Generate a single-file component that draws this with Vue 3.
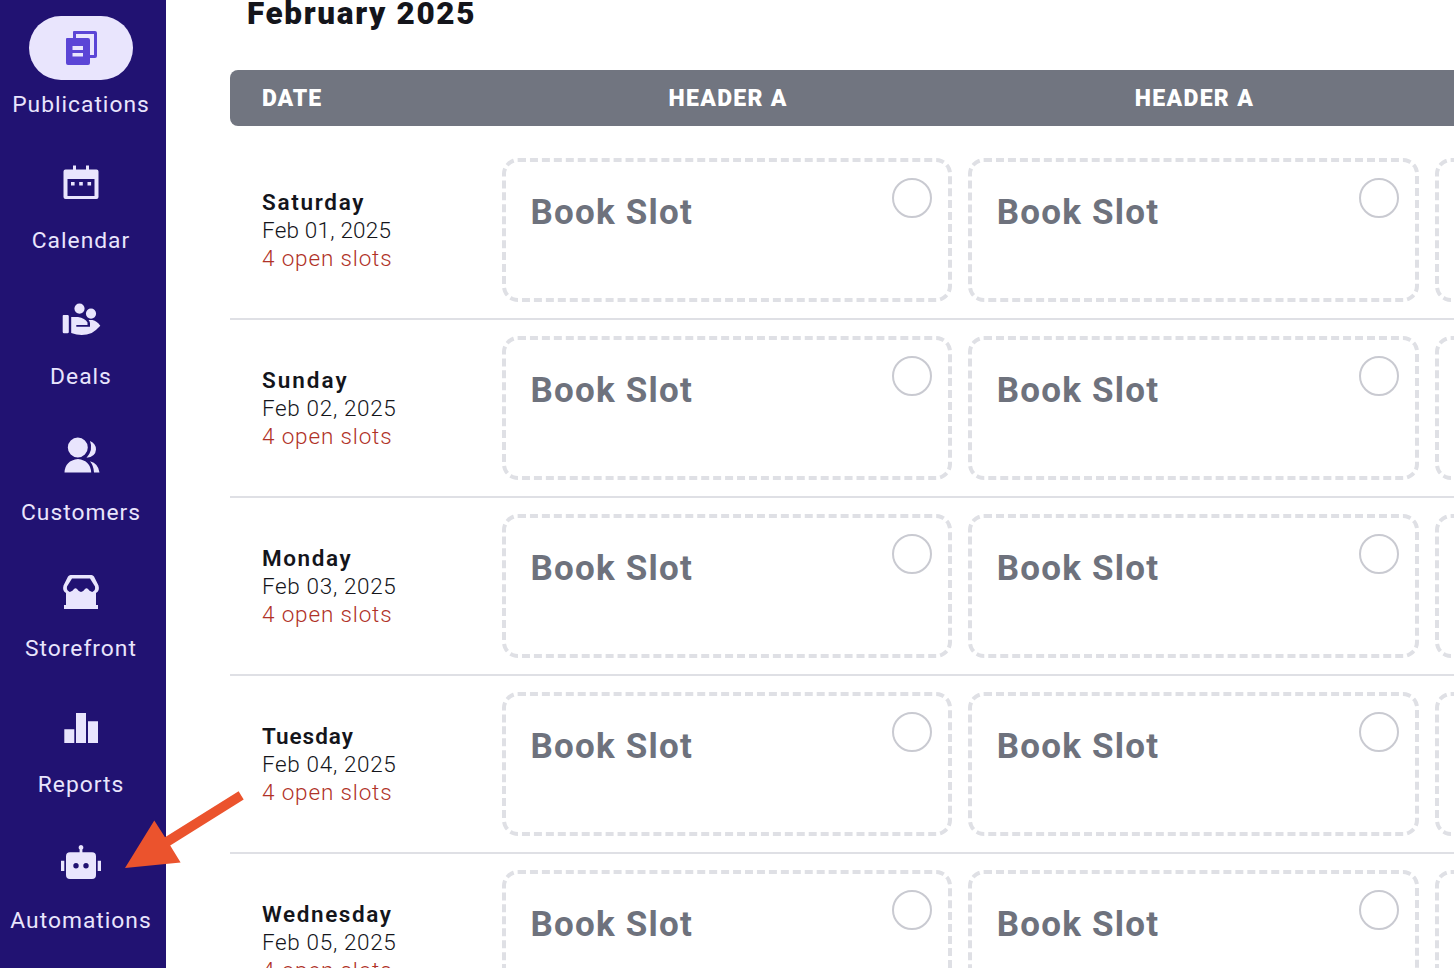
<template>
  <div class="page">
    <nav class="sidebar">
      <a
        v-for="item in navItems"
        :key="item.name"
        class="nav-item"
        :class="{ 'nav-item--active': item.name === activeItem }"
      >
        <span class="nav-pill">
          <svg class="nav-icon" viewBox="0 0 48 48">
            <path :d="item.icon" fill-rule="evenodd" />
          </svg>
        </span>
        <span class="nav-label">{{ item.name }}</span>
      </a>
    </nav>

    <main class="schedule">
      <h1 class="month">February 2025</h1>

      <div class="table-head">
        <div class="head-date">DATE</div>
        <div v-for="n in 2" :key="n" class="head-cell">HEADER A</div>
      </div>

      <div class="rows">
        <section v-for="day in days" :key="day.date" class="row">
          <div class="day">
            <strong class="day-name" :class="`day-name--${day.name.toLowerCase()}`">{{ day.name }}</strong>
            <span class="day-date" :class="{ 'day-date--narrow': day.date.includes('01') }">{{ day.date }}</span>
            <span class="day-open">4 open slots</span>
          </div>
          <div v-for="n in 2" :key="n" class="slot">
            <span class="slot-title">Book Slot</span>
            <span class="slot-check"></span>
          </div>
          <div class="slot"></div>
        </section>
      </div>
    </main>

    <svg class="arrow" viewBox="0 0 120 80">
      <path d="M0 78L29.3 30.5L40 47.3L113.6 1.2L118.7 9.6L45.2 55.5L55.6 72.5Z" />
    </svg>
  </div>
</template>

<script setup>
import { ref } from 'vue'

const activeItem = ref('Publications')

const navItems = [
  {
    name: 'Publications',
    icon: 'M17 7H38a2 2 0 0 1 2 2V32a2 2 0 0 1-2 2H33V31H37V10H19V14H16V8a1 1 0 0 1 1-1ZM10 14H31a2 2 0 0 1 2 2V39a2 2 0 0 1-2 2H11a2 2 0 0 1-2-2V15a1 1 0 0 1 1-1ZM15.5 22V26H26V22ZM15.5 29V32.5H26V29Z'
  },
  {
    name: 'Calendar',
    icon: 'M16 5.500h3v4h10v-4h3v4h7.500a2 2 0 0 1 2 2v25.500a2 2 0 0 1-2 2h-31a2 2 0 0 1-2-2V11.500a2 2 0 0 1 2-2H16ZM10.500 19v17h27V19ZM14 22h3.600v3.600H14ZM22.200 22h3.600v3.600h-3.600ZM30.500 22h3.600v3.600h-3.600Z'
  },
  {
    name: 'Deals',
    icon: 'M22.500 7.500a5.100 5.100 0 1 0 0 10.200a5.100 5.100 0 1 0 0-10.200ZM34 12.500a5.100 5.100 0 1 0 0 10.200a5.100 5.100 0 1 0 0-10.200ZM6.500 19H10.500a1.300 1.300 0 0 1 1.300 1.300V36a1.300 1.300 0 0 1-1.300 1.300H7a1.300 1.300 0 0 1-1.300-1.300V20Q5.700 19 6.500 19ZM14.200 21H21Q28 22 30.500 26.500V29H19.300V30.700H33V27.500Q33 25.500 31.700 24.200V24H35.500Q40 25 43.300 29.700Q39 34.500 34.700 37Q25 41 14.200 37Z'
  },
  {
    name: 'Customers',
    icon: 'M20.800 5.500a10 10 0 1 0 0 20a10 10 0 1 0 0-20ZM7.500 40.500Q8 28.500 21 27Q33.500 28.500 34.200 40.500ZM33 9Q39 11.500 39 17.500Q38.500 25 29.500 25.700Q36.500 18 33 9ZM33 29.200Q41.500 31.500 42.500 40.500H37Q36.800 34 33 29.200Z'
  },
  {
    name: 'Storefront',
    icon: 'M13.500 7H34.500Q36 7 37 8.500L41.500 17.500Q43 23 39 25V37H41V41H7V37H9V25Q5 23 6.500 17.500L11 8.500Q12 7 13.500 7ZM15 10.500L10 18.500Q9.200 22.500 12.800 24Q16 23 17 21Q18.500 19.500 20 21Q22 24 24 24Q26 24 28 21Q29.500 19.500 31 21Q32 23 35.200 24Q38.800 22.500 38 18.500L33 10.500Z'
  },
  {
    name: 'Reports',
    icon: 'M7.300 25.300H17.300V39H7.300ZM19 9H29V39H19ZM31 17.200H41V39H31Z'
  },
  {
    name: 'Automations',
    icon: 'M24 5.100a2.500 2.500 0 0 0-1.400 4.500V12.300H13a4 4 0 0 0-4 4V35a4 4 0 0 0 4 4H35a4 4 0 0 0 4-4V16.300a4 4 0 0 0-4-4H25.400V9.600A2.500 2.500 0 0 0 24 5.100ZM4 20.700H7.300V31H4ZM40.700 20.700H44V31H40.700ZM19 23a2.700 2.700 0 1 0 0 5.400a2.700 2.700 0 1 0 0-5.400ZM29 23a2.700 2.700 0 1 0 0 5.400a2.700 2.700 0 1 0 0-5.400Z'
  }
]

const days = [
  { name: 'Saturday', date: 'Feb 01, 2025' },
  { name: 'Sunday', date: 'Feb 02, 2025' },
  { name: 'Monday', date: 'Feb 03, 2025' },
  { name: 'Tuesday', date: 'Feb 04, 2025' },
  { name: 'Wednesday', date: 'Feb 05, 2025' }
]
</script>

<style>
body {
  background: #fff;
}
</style>

<style scoped>
.page {
  position: relative;
  display: flex;
  height: 968px;
  overflow: hidden;
  font-family: Roboto, 'Liberation Sans', sans-serif;
  color: #14151b;
}

.sidebar {
  display: flex;
  flex: 0 0 166px;
  flex-direction: column;
  gap: 32px;
  box-sizing: border-box;
  padding: 16px 4px 0 0;
  background: #211272;
}

.nav-item {
  display: flex;
  flex-direction: column;
  align-items: center;
  flex: none;
  height: 104px;
  color: #e9e5fd;
}

.nav-pill {
  display: flex;
  flex: none;
  align-items: center;
  justify-content: center;
  width: 104px;
  height: 64px;
  border-radius: 32px;
}

.nav-item--active .nav-pill {
  background: #e9e5fd;
  color: #5b45d6;
}

.nav-icon {
  width: 48px;
  height: 48px;
  fill: currentColor;
}

.nav-label {
  margin-top: 8px;
  font-size: 22.8px;
  line-height: 34px;
  letter-spacing: 1px;
  white-space: nowrap;
}

.schedule {
  flex: none;
  width: 1672px;
  padding-left: 64px;
}

.month {
  margin: -2px 0 40px 17px;
  font-size: 31.5px;
  font-weight: 900;
  line-height: 32px;
  letter-spacing: 1.65px;
}

.table-head {
  display: grid;
  grid-template-columns: 240px repeat(3, 450.33px);
  gap: 16px;
  box-sizing: border-box;
  height: 56px;
  padding-left: 16px;
  border-radius: 8px;
  background: #717580;
  color: #fff;
  font-size: 23px;
  font-weight: 900;
  line-height: 58px;
  letter-spacing: 1.3px;
}

.head-date {
  padding-left: 16px;
  letter-spacing: 0.9px;
}

.head-cell {
  padding-left: 2px;
  text-align: center;
}

.rows {
  padding-top: 16px;
}

.row {
  display: grid;
  grid-template-columns: 240px repeat(3, 450.33px);
  gap: 16px;
  padding: 16px 0 16px 16px;
  border-bottom: 2px solid #dfe0e5;
}

.day {
  display: flex;
  flex-direction: column;
  justify-content: center;
  padding-left: 16px;
  font-size: 22.5px;
  line-height: 28px;
}

.day-name {
  font-weight: 600;
  letter-spacing: 1.7px;
}

.day-name--sunday {
  letter-spacing: 2px;
}

.day-name--monday {
  letter-spacing: 1.6px;
}

.day-name--tuesday {
  letter-spacing: 1px;
}

.day-name--wednesday {
  letter-spacing: 1.6px;
}

.day-date {
  font-weight: 300;
  letter-spacing: 0.65px;
}

.day-date--narrow {
  letter-spacing: 0.2px;
}

.day-open {
  color: #b03227;
  font-weight: 300;
  letter-spacing: 0.85px;
}

.slot {
  display: flex;
  justify-content: space-between;
  box-sizing: border-box;
  height: 144px;
  padding: 16px 16px 0 24.5px;
  border: 4px dashed #dfe0e5;
  border-radius: 16px;
}

.slot-title {
  padding-top: 15px;
  color: #6e727d;
  font-size: 35px;
  font-weight: 700;
  line-height: 40px;
  letter-spacing: 1.2px;
}

.slot-check {
  box-sizing: border-box;
  width: 40px;
  height: 40px;
  border: 2px solid #c9cad1;
  border-radius: 50%;
}

/* callout pointing at Automations, drawn over the page */
.arrow {
  position: absolute;
  top: 790px;
  left: 125px;
  width: 120px;
  height: 80px;
  fill: #eb532d;
}
</style>
